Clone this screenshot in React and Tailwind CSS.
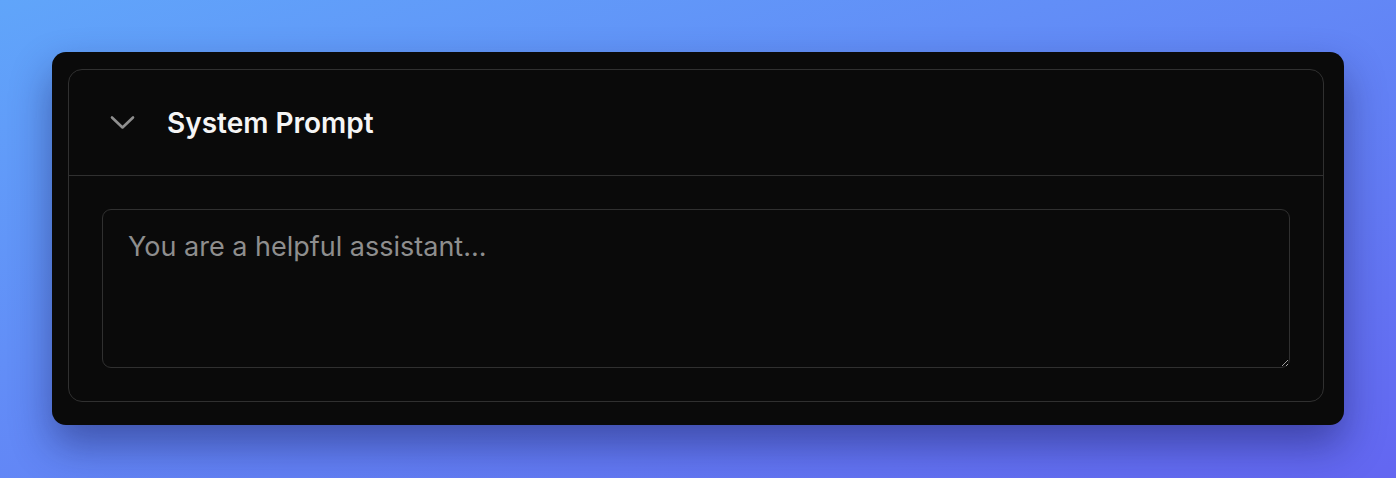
import React from 'react';

const Chevron = () => (
  <svg width="26" height="16" viewBox="0 0 26 16" fill="none" className="shrink-0">
    <path d="M2 2.5 L12.5 12.5 L23 2.5" stroke="#8f8f8f" strokeWidth="2.6" strokeLinecap="round" strokeLinejoin="round" />
  </svg>
);

const App = () => {
  return (
    <div
      className="w-[1396px] h-[478px] bg-gradient-to-br from-[#60a5fa] to-[#6366f1] pt-[52px] px-[52px]"
      style={{ fontFamily: 'Inter, "Noto Sans", sans-serif' }}
    >
      <div className="bg-[#0a0a0a] rounded-[14px] shadow-[0_20px_40px_rgba(20,20,80,0.45)] pt-[17px] pl-[16px] pr-[20px] pb-[23px]">
        <div className="border border-[#303030] rounded-[14px]">
          {/* Header */}
          <div className="h-[106px] flex items-center pl-[41px] gap-[31px] border-b border-[#303030]">
            <Chevron />
            <span className="text-[28px] font-semibold text-[#f5f5f5]">System Prompt</span>
          </div>

          {/* Body */}
          <div className="p-[33px]">
            <textarea
              className="block w-full h-[159px] bg-[#0a0a0a] border border-[#303030] rounded-[9px] px-[25px] py-[18px] text-[27px] leading-[38px] text-white placeholder:text-[#8e8e8e] outline-none"
              placeholder="You are a helpful assistant..."
            />
          </div>
        </div>
      </div>
    </div>
  );
};

export default App;
